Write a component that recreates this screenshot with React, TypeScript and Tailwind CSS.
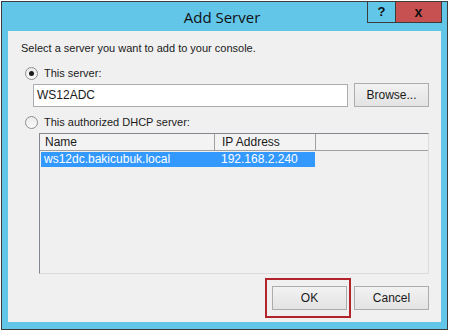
import React from 'react';

const UI_FONT = { fontFamily: '"Liberation Sans", Arial, sans-serif' };
const TITLE_FONT = { fontFamily: '"Open Sans", "Noto Sans", sans-serif' };

function Radio({ checked }: { checked?: boolean }) {
  return (
    <span className="flex h-[13px] w-[13px] items-center justify-center rounded-full border border-[#8e8f8f] bg-gradient-to-b from-[#eaeaea] to-[#fbfbfb]">
      {checked && <span className="h-[5px] w-[5px] rounded-full bg-[#1b1b1b]" />}
    </span>
  );
}

function Button({ label }: { label: string }) {
  return (
    <button className="flex h-[24px] w-[75px] items-center justify-center border border-[#acacac] bg-gradient-to-b from-[#f2f2f2] to-[#e3e3e3] text-[12px] text-[#1a1a1a]">
      {label}
    </button>
  );
}

export default function App() {
  return (
    <div className="h-[331px] w-[449px] bg-white pl-px pt-px" style={UI_FONT}>
      <div className="flex h-[329px] w-[447px] flex-col border border-[#3c3c3c] bg-[#62c6e9]">
        {/* title bar */}
        <div className="flex h-[29px] items-start">
          <div className="flex-1" />
          <div className="pt-[4px] text-[15px] text-[#111]" style={TITLE_FONT}>
            Add Server
          </div>
          <div className="flex flex-1 justify-end pr-[5px]">
            <div className="flex h-[21px] border border-t-0 border-[#3c3c3c]">
              <span className="flex w-[28px] items-center justify-center border-r border-[#3c3c3c] text-[13px] font-bold text-[#111]">
                ?
              </span>
              <span className="flex w-[45px] items-center justify-center bg-[#c75050] text-[14px] font-bold text-[#111]">
                x
              </span>
            </div>
          </div>
        </div>

        {/* client area */}
        <div className="mx-[6px] mb-[7px] flex flex-1 flex-col bg-[#f0f0f0] pl-[13px] pr-[12px] text-[11px] text-[#1a1a1a]">
          <div className="mt-[11px] leading-[13px]">Select a server you want to add to your console.</div>

          <div className="mt-[12px] flex items-center gap-[6px] pl-[4px] leading-[13px]">
            <Radio checked />
            <span>This server:</span>
          </div>
          <div className="mt-[3px] flex items-center pl-[12px]">
            <div className="flex h-[23px] w-[316px] items-center border border-[#abadb3] bg-white px-[3px] text-[12px]">
              WS12ADC
            </div>
            <div className="ml-[6px]">
              <Button label="Browse..." />
            </div>
          </div>

          <div className="mt-[9px] flex items-center gap-[6px] pl-[4px] leading-[13px]">
            <Radio />
            <span>This authorized DHCP server:</span>
          </div>
          <div className="ml-[18px] mt-[4px] flex h-[141px] w-[390px] flex-col border border-t-[#828790] border-l-[#828790] border-r-[#dcdcdc] border-b-[#dcdcdc] bg-[#f0f0f0] text-[12px]">
            <div className="flex h-[17px] border-b border-[#a0a0a0] bg-[#f3f3f3] leading-[16px]">
              <div className="w-[175px] border-r border-[#a0a0a0] pl-[5px]">Name</div>
              <div className="w-[101px] border-r border-[#a0a0a0] pl-[7px]">IP Address</div>
            </div>
            <div className="ml-px mt-px flex h-[15px] w-[274px] bg-[#3399ff] leading-[15px] text-white">
              <div className="w-[175px] pl-[3px]">ws12dc.bakicubuk.local</div>
              <div className="pl-[5px]">192.168.2.240</div>
            </div>
          </div>

          <div className="mt-[12px] flex justify-end gap-[7px]">
            <div className="relative">
              <Button label="OK" />
              <span className="pointer-events-none absolute -bottom-[8px] -left-[7px] -right-[4px] -top-[8px] border-2 border-[#b3232b]" />
            </div>
            <Button label="Cancel" />
          </div>
        </div>
      </div>
    </div>
  );
}
